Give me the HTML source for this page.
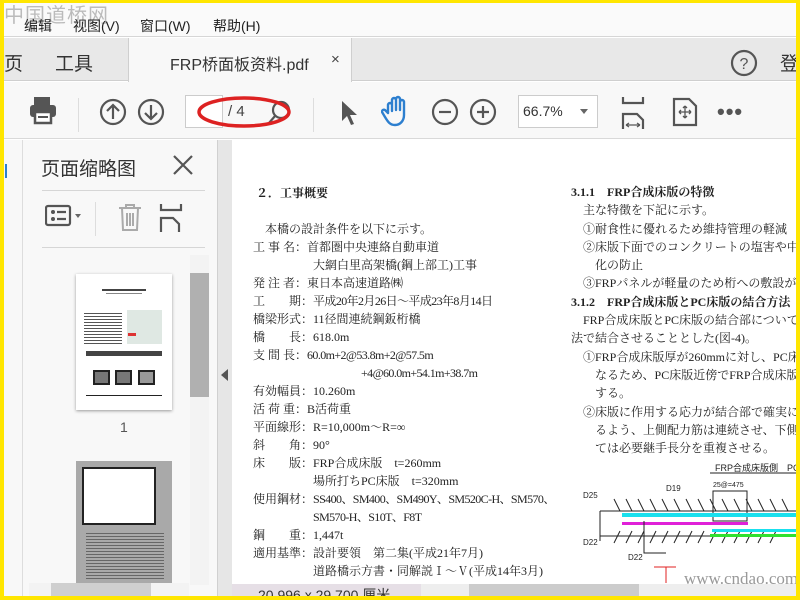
<!DOCTYPE html>
<html><head><meta charset="utf-8"><style>
*{margin:0;padding:0;box-sizing:border-box}
body{width:800px;height:600px;overflow:hidden;background:#ffe600;position:relative;font-family:"Liberation Sans","Noto Sans CJK SC",sans-serif}
.abs{position:absolute}
.doc{font-family:"Liberation Serif","Noto Serif CJK SC",serif;font-size:12px;color:#222;white-space:nowrap}
.n{letter-spacing:-0.6px}
.ic{stroke:#555;fill:none;stroke-width:2.2}
</style></head><body>
<div class="abs" style="left:4px;top:3px;width:792px;height:593px;background:#fff;overflow:hidden">
 <!-- menu -->
 <div class="abs" style="left:0;top:0;width:792px;height:34px;background:#fafafa;border-bottom:1px solid #d6d6d6"></div>
 <div class="abs" style="left:0;top:-4px;font-size:20px;color:#bbb;letter-spacing:1px">中国道桥网</div>
 <div class="abs" style="left:20px;top:13px;font-size:14px;color:#222;word-spacing:0">编辑</div>
 <div class="abs" style="left:69px;top:13px;font-size:14px;color:#222">视图(V)</div>
 <div class="abs" style="left:136px;top:13px;font-size:14px;color:#222">窗口(W)</div>
 <div class="abs" style="left:209px;top:13px;font-size:14px;color:#222">帮助(H)</div>
 <!-- tabs -->
 <div class="abs" style="left:0;top:35px;width:792px;height:43px;background:#e8e8e8;border-bottom:1px solid #cfcfcf"></div>
 <div class="abs" style="left:124px;top:35px;width:224px;height:44px;background:#f8f8f8;border-left:1px solid #cfcfcf;border-right:1px solid #cfcfcf"></div>
 <div class="abs" style="left:0;top:46px;font-size:19px;color:#333">页</div>
 <div class="abs" style="left:51px;top:46px;font-size:19px;color:#333">工具</div>
 <div class="abs" style="left:166px;top:48px;font-size:16px;color:#333">FRP桥面板资料.pdf</div>
 <div class="abs" style="left:327px;top:48px;font-size:15px;color:#444">×</div>
 <svg class="abs" style="left:726px;top:46px" width="28" height="28"><circle cx="14" cy="14" r="12" class="ic" stroke-width="2"/><text x="14" y="20" font-size="16" text-anchor="middle" fill="#555" font-family="Liberation Sans">?</text></svg>
 <div class="abs" style="left:776px;top:46px;font-size:19px;color:#333">登</div>
 <!-- toolbar -->
 <div class="abs" style="left:0;top:79px;width:792px;height:57px;background:#f8f8f8;border-bottom:1px solid #d9d9d9"></div>
 <svg class="abs" style="left:24px;top:92px" width="32" height="32"><rect x="6" y="2" width="16" height="8" fill="#555"/><rect x="2" y="10" width="26" height="12" rx="3" fill="#555"/><rect x="7" y="17" width="16" height="11" fill="#fff" stroke="#555" stroke-width="2.5"/><rect x="10" y="21" width="10" height="2" fill="#555"/></svg>
 <div class="abs" style="left:74px;top:95px;width:1px;height:34px;background:#ddd"></div>
 <svg class="abs" style="left:94px;top:94px" width="30" height="30"><circle cx="15" cy="15" r="12" class="ic"/><path d="M15 22V8M9 14l6-6 6 6" class="ic"/></svg>
 <svg class="abs" style="left:132px;top:94px" width="30" height="30"><circle cx="15" cy="15" r="12" class="ic"/><path d="M15 8v14M9 16l6 6 6-6" class="ic"/></svg>
 <div class="abs" style="left:181px;top:92px;width:38px;height:33px;background:#fff;border:1px solid #ccc"></div>
 <div class="abs" style="left:224px;top:100px;font-size:15px;color:#444">/ 4</div>
 <svg class="abs" style="left:262px;top:96px" width="28" height="28"><circle cx="15" cy="11" r="8" class="ic"/><path d="M9 17l-6 7" class="ic" stroke-width="3"/></svg>
 <svg class="abs" style="left:192px;top:90px" width="100" height="44"><ellipse cx="48" cy="19" rx="45" ry="14" fill="none" stroke="#d22" stroke-width="3.5"/></svg>
 <div class="abs" style="left:309px;top:95px;width:1px;height:34px;background:#ddd"></div>
 <svg class="abs" style="left:334px;top:96px" width="22" height="28"><path d="M4 2v20l5-5 4 9 3-1-4-9h7z" fill="#555"/></svg>
 <svg class="abs" style="left:377px;top:92px" width="32" height="34"><path d="M7 18V10a2 2 0 014 0v6V5a2 2 0 014 0v10V4a2 2 0 014 0v11V7a2 2 0 014 0v13c0 6-4 10-9 10s-7-3-10-8l-3-5a2 2 0 013-2z" fill="none" stroke="#2d7fcf" stroke-width="2.4" stroke-linejoin="round"/></svg>
 <svg class="abs" style="left:426px;top:94px" width="30" height="30"><circle cx="15" cy="15" r="12" class="ic"/><path d="M9 15h12" class="ic"/></svg>
 <svg class="abs" style="left:464px;top:94px" width="30" height="30"><circle cx="15" cy="15" r="12" class="ic"/><path d="M9 15h12M15 9v12" class="ic"/></svg>
 <div class="abs" style="left:514px;top:92px;width:80px;height:33px;background:#fff;border:1px solid #ccc"></div>
 <div class="abs" style="left:519px;top:100px;font-size:14px;color:#333">66.7%</div>
 <div class="abs" style="left:576px;top:106px;width:0;height:0;border-left:4px solid transparent;border-right:4px solid transparent;border-top:5px solid #666"></div>
 <svg class="abs" style="left:616px;top:92px" width="26" height="34"><path d="M3 2v6h20V2M3 34V19h14l6 6v9" class="ic"/><path d="M6 30h14M6 30l3-2M6 30l3 2M20 30l-3-2M20 30l-3 2" stroke="#555" stroke-width="1.2" fill="none"/></svg>
 <svg class="abs" style="left:668px;top:94px" width="26" height="30"><path d="M2 2h15l7 7v19H2z" class="ic"/><path d="M13 9v12M7 15h12M13 9l-2 2M13 9l2 2M13 21l-2-2M13 21l2-2M7 15l2-2M7 15l2 2M19 15l-2-2M19 15l-2 2" stroke="#555" stroke-width="1.3" fill="none"/></svg>
 <div class="abs" style="left:713px;top:96px;font-size:22px;color:#555;letter-spacing:1px;font-weight:bold">•••</div>
 <!-- left strip -->
 <div class="abs" style="left:0;top:137px;width:19px;height:456px;background:#f8f8f8;border-right:1px solid #ddd"></div>
 <div class="abs" style="left:1px;top:161px;width:2px;height:14px;background:#2d7fcf"></div>
 <!-- panel -->
 <div class="abs" style="left:19px;top:137px;width:198px;height:456px;background:#f8f8f8"></div>
 <div class="abs" style="left:37px;top:151px;font-size:19px;color:#333">页面缩略图</div>
 <svg class="abs" style="left:168px;top:151px" width="22" height="22"><path d="M2 2l18 18M20 2L2 20" stroke="#555" stroke-width="2.2"/></svg>
 <div class="abs" style="left:38px;top:187px;width:163px;height:1px;background:#d6d6d6"></div>
 <svg class="abs" style="left:41px;top:201px" width="40" height="26"><rect x="1" y="2" width="24" height="19" rx="2" class="ic"/><circle cx="8" cy="8" r="2" fill="#555"/><circle cx="8" cy="15" r="2" fill="#555"/><path d="M12 8h9M12 15h9" class="ic"/><path d="M30 10h6l-3 4z" fill="#666"/></svg>
 <div class="abs" style="left:91px;top:199px;width:1px;height:34px;background:#ddd"></div>
 <svg class="abs" style="left:113px;top:200px" width="26" height="30"><path d="M2 5h22M9 5V2h8v3M5 5l1 22h14l1-22M10 10v13M13 10v13M16 10v13" stroke="#aaa" stroke-width="2" fill="none"/></svg>
 <svg class="abs" style="left:154px;top:201px" width="26" height="30"><path d="M3 0v6h20V0M3 28V14h12l6 6v8" class="ic"/></svg>
 <div class="abs" style="left:38px;top:244px;width:163px;height:1px;background:#d6d6d6"></div>
 <!-- thumbs -->
 <div class="abs" style="left:72px;top:271px;width:96px;height:136px;background:#fff;box-shadow:0 1px 3px #999">
  <div class="abs" style="left:26px;top:15px;width:44px;height:2px;background:#444"></div>
  <div class="abs" style="left:30px;top:19px;width:36px;height:1px;background:#888"></div>
  <div class="abs" style="left:8px;top:38px;width:38px;height:34px;background:repeating-linear-gradient(#fff 0 1px,#555 1px 2px,#fff 2px 3px)"></div>
  <div class="abs" style="left:51px;top:36px;width:35px;height:34px;background:#dfe8e3"></div>
  <div class="abs" style="left:52px;top:59px;width:8px;height:3px;background:#d33"></div>
  <div class="abs" style="left:10px;top:77px;width:76px;height:5px;background:#444"></div>
  <div class="abs" style="left:17px;top:96px;width:17px;height:15px;border:2px solid #222;background:#777"></div>
  <div class="abs" style="left:39px;top:96px;width:17px;height:15px;border:2px solid #222;background:#777"></div>
  <div class="abs" style="left:62px;top:96px;width:17px;height:15px;border:2px solid #222;background:#999"></div>
  <div class="abs" style="left:10px;top:121px;width:76px;height:1px;background:#222"></div>
 </div>
 <div class="abs" style="left:116px;top:416px;font-size:14px;color:#555">1</div>
 <div class="abs" style="left:72px;top:458px;width:96px;height:124px;background:#a9a9a9">
  <div class="abs" style="left:6px;top:6px;width:74px;height:58px;background:#fff;border:2px solid #222"></div>
  <div class="abs" style="left:10px;top:70px;width:78px;height:50px;background:repeating-linear-gradient(#a9a9a9 0 2px,#666 2px 3px)"></div>
 </div>
 <div class="abs" style="left:186px;top:252px;width:19px;height:330px;background:#f3f3f3"></div>
 <div class="abs" style="left:186px;top:270px;width:19px;height:124px;background:#b0b0b0"></div>
 <div class="abs" style="left:25px;top:580px;width:160px;height:13px;background:#f3f3f3"></div>
 <div class="abs" style="left:47px;top:580px;width:100px;height:13px;background:#cfcfcf"></div>
 <!-- collapse strip -->
 <div class="abs" style="left:213px;top:137px;width:15px;height:456px;background:#e6e6e6;border-left:1px solid #d0d0d0"></div>
 <div class="abs" style="left:217px;top:366px;border-top:6px solid transparent;border-bottom:6px solid transparent;border-right:7px solid #555"></div>
 <!-- doc -->
 <div class="abs" style="left:228px;top:137px;width:564px;height:443px;background:#fff"></div>
 <div class="abs doc" style="left:252px;top:181px;font-weight:bold">２．工事概要</div>
 <div class="abs doc" style="left:249px;top:217px;line-height:18px">
 　本橋の設計条件を以下に示す。<br>
 工 事 名：首都圏中央連絡自動車道<br>
 　　　　　大網白里高架橋(鋼上部工)工事<br>
 発 注 者：東日本高速道路㈱<br>
 工　　期：<span class="n">平成20年2月26日～平成23年8月14日</span><br>
 橋梁形式：11径間連続鋼鈑桁橋<br>
 橋　　長：618.0m<br>
 支 間 長：<span class="n">60.0m+2@53.8m+2@57.5m</span><br>
 　　　　　　　　　<span class="n">+4@60.0m+54.1m+38.7m</span><br>
 有効幅員：10.260m<br>
 活 荷 重：B活荷重<br>
 平面線形：R=10,000m～R=∞<br>
 斜　　角：90°<br>
 床　　版：FRP合成床版　t=260mm<br>
 　　　　　場所打ちPC床版　t=320mm<br>
 使用鋼材：<span class="n">SS400、SM400、SM490Y、SM520C-H、SM570、</span><br>
 　　　　　<span class="n">SM570-H、S10T、F8T</span><br>
 鋼　　重：1,447t<br>
 適用基準：設計要領　第二集(平成21年7月)<br>
 　　　　　道路橋示方書・同解説Ⅰ～Ⅴ(平成14年3月)
 </div>
 <div class="abs doc" style="left:567px;top:180px;line-height:18.3px;width:225px;overflow:hidden">
 <b>3.1.1　FRP合成床版の特徴</b><br>
 　主な特徴を下記に示す。<br>
 　①耐食性に優れるため維持管理の軽減<br>
 　②床版下面でのコンクリートの塩害や中性<br>
 　　化の防止<br>
 　③FRPパネルが軽量のため桁への敷設が容易<br>
 <b>3.1.2　FRP合成床版とPC床版の結合方法</b><br>
 　FRP合成床版とPC床版の結合部については<br>
 法で結合させることとした(図-4)。<br>
 　①FRP合成床版厚が260mmに対し、PC床版厚<br>
 　　なるため、PC床版近傍でFRP合成床版厚<br>
 　　する。<br>
 　②床版に作用する応力が結合部で確実に応<br>
 　　るよう、上側配力筋は連続させ、下側配<br>
 　　ては必要継手長分を重複させる。
 </div>
 <!-- drawing -->
 <svg class="abs" style="left:576px;top:458px" width="216" height="122">
  <text x="135" y="10" font-size="9" fill="#222" font-family="Liberation Sans,Noto Sans CJK JP">FRP合成床版側　PC床</text>
  <path d="M130 12h86" stroke="#222"/>
  <text x="3" y="37" font-size="8" fill="#222">D25</text><text x="86" y="30" font-size="8" fill="#222">D19</text>
  <text x="133" y="26" font-size="7" fill="#222">25@=475</text>
  <path d="M20 50h196M20 75h196M20 50v30" stroke="#222" fill="none"/>
  <path d="M133 30h34v30h-34z" stroke="#222" fill="none"/>
  <path d="M40 50l-6-12M52 50l-6-12M64 50l-6-12M76 50l-6-12M88 50l-6-12M100 50l-6-12M112 50l-6-12M124 50l-6-12M136 50l-6-12M148 50l-6-12M160 50l-6-12M172 50l-6-12M184 50l-6-12M196 50l-6-12M208 50l-6-12M34 82l6-12M46 82l6-12M58 82l6-12M70 82l6-12M82 82l6-12M94 82l6-12M106 82l6-12M118 82l6-12M130 82l6-12M142 82l6-12M154 82l6-12M166 82l6-12M178 82l6-12M190 82l6-12" stroke="#222" fill="none"/>
  <rect x="42" y="52" width="174" height="4" fill="#19e0ee"/>
  <rect x="42" y="61" width="126" height="3" fill="#e020d8"/>
  <rect x="132" y="68" width="84" height="3" fill="#19e0ee"/>
  <rect x="130" y="73" width="86" height="3" fill="#30e030"/>
  <text x="3" y="84" font-size="8" fill="#222">D22</text><text x="48" y="99" font-size="8" fill="#222">D22</text>
  <path d="M64 60v32h22" stroke="#222" fill="none"/>
  <path d="M74 106h22M86 106v18" stroke="#e02020" fill="none"/>
 </svg>
 <div class="abs" style="left:680px;top:566px;font-size:17px;color:#999;font-family:'Liberation Serif',serif">www.cndao.com</div>
 <!-- status -->
 <div class="abs" style="left:228px;top:581px;width:189px;height:12px;background:#e6dfe6;overflow:hidden"><div style="padding-left:26px;font-size:14px;color:#333;line-height:22px">20.996 x 29.700 厘米</div></div>
 <div class="abs" style="left:417px;top:581px;width:375px;height:12px;background:#eee"></div>
 <div class="abs" style="left:465px;top:581px;width:170px;height:12px;background:#ccc"></div>
</div>
</body></html>
